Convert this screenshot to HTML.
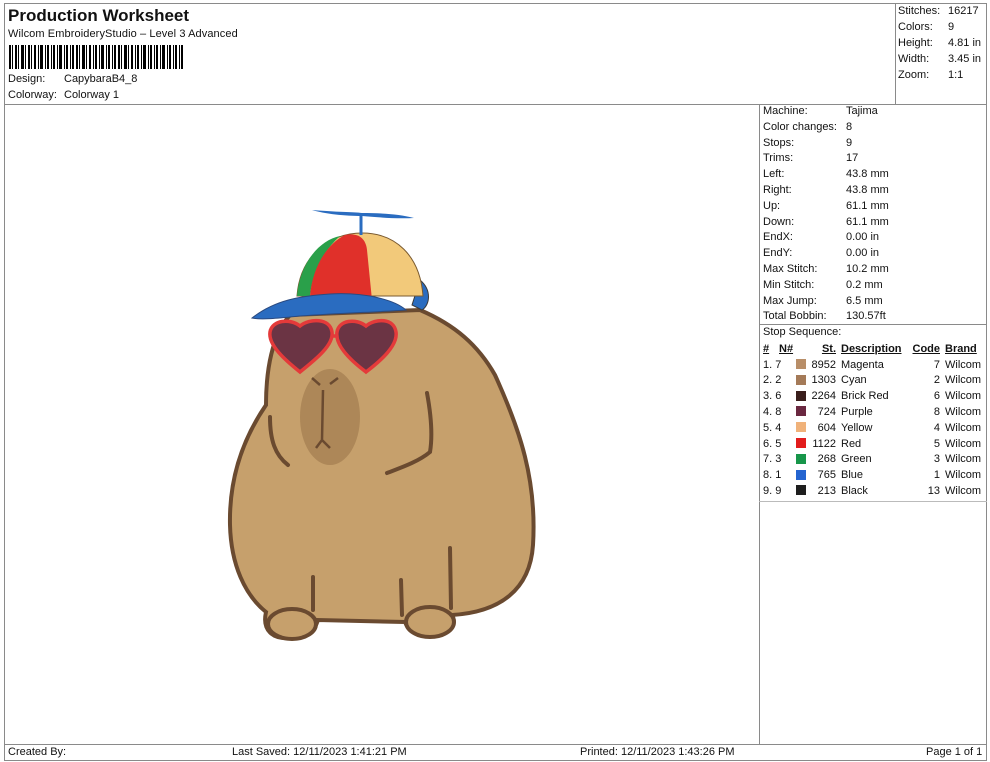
<!DOCTYPE html>
<html><head><meta charset="utf-8"><style>
*{margin:0;padding:0;box-sizing:border-box}
body{width:990px;height:762px;background:#fff;font-family:"Liberation Sans",Arial,sans-serif;font-size:11px;color:#111;position:relative;overflow:hidden}
.a{position:absolute;white-space:nowrap;line-height:13px}
.ln{position:absolute;background:#8a8a8a}
.sw{position:absolute;width:10px;height:10px}
u{text-decoration:underline}
</style></head><body>
<div class="ln" style="left:4px;top:3px;width:983px;height:1px"></div>
<div class="ln" style="left:4px;top:3px;width:1px;height:757px"></div>
<div class="ln" style="left:986px;top:3px;width:1px;height:757px"></div>
<div class="ln" style="left:4px;top:104px;width:983px;height:1px"></div>
<div class="ln" style="left:895px;top:3px;width:1px;height:101px"></div>
<div class="ln" style="left:759px;top:104px;width:1px;height:640px"></div>
<div class="ln" style="left:759px;top:324px;width:228px;height:1px"></div>
<div class="ln" style="left:759px;top:501px;width:228px;height:1px;background:#bbb"></div>
<div class="ln" style="left:4px;top:744px;width:983px;height:1px"></div>
<div class="ln" style="left:4px;top:760px;width:983px;height:1px"></div>

<div class="a" style="left:8px;top:6px;font-size:17px;font-weight:bold;line-height:20px">Production Worksheet</div>
<div class="a" style="left:8px;top:28px;letter-spacing:0.1px">Wilcom EmbroideryStudio – Level 3 Advanced</div>
<svg class="a" style="left:9px;top:45px" width="175" height="24">
<g fill="#000">
<rect x="0" width="2" height="24"/><rect x="3" width="1" height="24"/><rect x="6" width="2" height="24"/><rect x="9" width="1" height="24"/><rect x="12" width="3" height="24"/><rect x="16" width="1" height="24"/><rect x="19" width="2" height="24"/><rect x="22" width="1" height="24"/><rect x="25" width="2" height="24"/><rect x="29" width="1" height="24"/><rect x="31" width="3" height="24"/><rect x="36" width="1" height="24"/><rect x="38" width="2" height="24"/><rect x="42" width="1" height="24"/><rect x="44" width="2" height="24"/><rect x="48" width="1" height="24"/><rect x="50" width="3" height="24"/><rect x="55" width="1" height="24"/><rect x="57" width="2" height="24"/><rect x="61" width="1" height="24"/><rect x="63" width="2" height="24"/><rect x="67" width="2" height="24"/><rect x="70" width="1" height="24"/><rect x="73" width="3" height="24"/><rect x="77" width="1" height="24"/><rect x="80" width="2" height="24"/><rect x="84" width="1" height="24"/><rect x="86" width="2" height="24"/><rect x="90" width="1" height="24"/><rect x="92" width="3" height="24"/><rect x="97" width="1" height="24"/><rect x="99" width="2" height="24"/><rect x="103" width="1" height="24"/><rect x="105" width="2" height="24"/><rect x="109" width="2" height="24"/><rect x="112" width="1" height="24"/><rect x="115" width="3" height="24"/><rect x="119" width="1" height="24"/><rect x="122" width="2" height="24"/><rect x="126" width="1" height="24"/><rect x="128" width="2" height="24"/><rect x="132" width="1" height="24"/><rect x="134" width="3" height="24"/><rect x="139" width="1" height="24"/><rect x="141" width="2" height="24"/><rect x="145" width="1" height="24"/><rect x="147" width="2" height="24"/><rect x="151" width="1" height="24"/><rect x="153" width="3" height="24"/><rect x="158" width="1" height="24"/><rect x="160" width="2" height="24"/><rect x="164" width="1" height="24"/><rect x="166" width="2" height="24"/><rect x="170" width="1" height="24"/><rect x="172" width="2" height="24"/>
</g></svg>
<div class="a" style="left:8px;top:73px">Design:</div><div class="a" style="left:64px;top:73px">CapybaraB4_8</div>
<div class="a" style="left:8px;top:89px">Colorway:</div><div class="a" style="left:64px;top:89px">Colorway 1</div>

<div class="a" style="left:898px;top:5px">Stitches:</div><div class="a" style="left:948px;top:5px">16217</div>
<div class="a" style="left:898px;top:21px">Colors:</div><div class="a" style="left:948px;top:21px">9</div>
<div class="a" style="left:898px;top:37px">Height:</div><div class="a" style="left:948px;top:37px">4.81 in</div>
<div class="a" style="left:898px;top:53px">Width:</div><div class="a" style="left:948px;top:53px">3.45 in</div>
<div class="a" style="left:898px;top:69px">Zoom:</div><div class="a" style="left:948px;top:69px">1:1</div>

<div style="position:absolute;left:763px;top:105px">
<div class="a" style="top:0">Machine:</div><div class="a" style="left:83px;top:0">Tajima</div>
<div class="a" style="top:15.8px">Color changes:</div><div class="a" style="left:83px;top:15.8px">8</div>
<div class="a" style="top:31.6px">Stops:</div><div class="a" style="left:83px;top:31.6px">9</div>
<div class="a" style="top:47.4px">Trims:</div><div class="a" style="left:83px;top:47.4px">17</div>
<div class="a" style="top:63.2px">Left:</div><div class="a" style="left:83px;top:63.2px">43.8 mm</div>
<div class="a" style="top:79px">Right:</div><div class="a" style="left:83px;top:79px">43.8 mm</div>
<div class="a" style="top:94.8px">Up:</div><div class="a" style="left:83px;top:94.8px">61.1 mm</div>
<div class="a" style="top:110.6px">Down:</div><div class="a" style="left:83px;top:110.6px">61.1 mm</div>
<div class="a" style="top:126.4px">EndX:</div><div class="a" style="left:83px;top:126.4px">0.00 in</div>
<div class="a" style="top:142.2px">EndY:</div><div class="a" style="left:83px;top:142.2px">0.00 in</div>
<div class="a" style="top:158px">Max Stitch:</div><div class="a" style="left:83px;top:158px">10.2 mm</div>
<div class="a" style="top:173.8px">Min Stitch:</div><div class="a" style="left:83px;top:173.8px">0.2 mm</div>
<div class="a" style="top:189.6px">Max Jump:</div><div class="a" style="left:83px;top:189.6px">6.5 mm</div>
<div class="a" style="top:205.4px">Total Bobbin:</div><div class="a" style="left:83px;top:205.4px">130.57ft</div>
<div class="a" style="top:221.2px">Stop Sequence:</div>
</div>

<div style="position:absolute;left:0;top:343px;font-weight:bold">
<div class="a" style="left:763px"><u>#</u></div><div class="a" style="left:779px"><u>N#</u></div>
<div class="a" style="left:805px;width:31px;text-align:right"><u>St.</u></div>
<div class="a" style="left:841px"><u>Description</u></div>
<div class="a" style="left:905px;width:35px;text-align:right"><u>Code</u></div>
<div class="a" style="left:945px"><u>Brand</u></div>
</div>
<div id="rows"></div>
<script>
var d=[["1. 7","#b88e68","8952","Magenta","7"],["2. 2","#a47a58","1303","Cyan","2"],["3. 6","#3a1e1c","2264","Brick Red","6"],["4. 8","#6a2840","724","Purple","8"],["5. 4","#f0b27a","604","Yellow","4"],["6. 5","#e21c1c","1122","Red","5"],["7. 3","#17964a","268","Green","3"],["8. 1","#2464d0","765","Blue","1"],["9. 9","#1e1e1e","213","Black","13"]];
var h="";d.forEach(function(r,i){var t=358.5+i*15.8;
h+='<div class="a" style="left:763px;top:'+t+'px">'+r[0]+'</div><div class="sw" style="left:796px;top:'+(t+0.5)+'px;background:'+r[1]+'"></div><div class="a" style="left:800px;width:36px;text-align:right;top:'+t+'px">'+r[2]+'</div><div class="a" style="left:841px;top:'+t+'px">'+r[3]+'</div><div class="a" style="left:905px;width:35px;text-align:right;top:'+t+'px">'+r[4]+'</div><div class="a" style="left:945px;top:'+t+'px">Wilcom</div>';});
document.getElementById("rows").innerHTML=h;
</script>

<div class="a" style="left:8px;top:746px">Created By:</div>
<div class="a" style="left:232px;top:746px">Last Saved: 12/11/2023 1:41:21 PM</div>
<div class="a" style="left:580px;top:746px">Printed: 12/11/2023 1:43:26 PM</div>
<div class="a" style="left:926px;top:746px">Page 1 of 1</div>

<svg style="position:absolute;left:0;top:0" width="760" height="744">
<g stroke="#6a4a30" stroke-width="4" stroke-linecap="round" fill="none">
<path fill="#c6a06c" d="M290 315 C 272 335,266 370,266 405 C 242 440,229 480,230 525 C 231 565,245 595,266 612 C 262 630,272 640,292 638 C 305 640,315 630,318 620 L 405 622 C 410 636,430 640,445 633 C 455 628,455 620,452 615 C 500 612,530 590,533 545 C 537 480,520 430,495 375 C 478 345,455 325,420 310 Z"/>
<ellipse cx="292" cy="624" rx="24" ry="15" fill="#c6a06c"/>
<ellipse cx="430" cy="622" rx="24" ry="15" fill="#c6a06c"/>
<path d="M313 577 L313 610 M401 580 L402 615 M450 548 L451 608"/>
<path d="M270 417 C 270 440,275 455,288 465 M427 393 C 432 420,432 440,430 452 C 418 462,400 468,387 473"/>
</g>
<ellipse cx="330" cy="417" rx="30" ry="48" fill="#ad8758"/>
<path d="M323 390 L322 440 L316 448 M322 440 L330 448 M312 378 L320 385 M338 378 L330 384" stroke="#6a4a30" stroke-width="2.5" fill="none"/>
<g fill="#6b3444" stroke="#e43a3a" stroke-width="3.5">
<path d="M300 372 C 285 360,268 345,270 332 C 272 320,290 318,300 326 C 310 318,330 318,332 332 C 334 345,315 360,300 372 Z"/>
<path d="M366 372 C 350 360,335 345,337 332 C 339 320,356 318,366 326 C 376 318,394 318,396 332 C 398 345,382 360,366 372 Z"/>
<path d="M332 336 L337 336" fill="none"/>
</g>
<path d="M420 280 C 432 290,430 305,422 310 L412 305 Z" fill="#2a6cc0" stroke="#3a3a3a" stroke-width="1"/>
<path d="M297 296 C 300 255,330 233,362 233 C 395 233,420 255,423 296 Z" fill="#f2c97a" stroke="#7a5a30" stroke-width="1"/>
<path d="M297 296 C 300 262,320 240,340 236 C 322 252,312 275,310 296 Z" fill="#2aa04a"/>
<path d="M310 296 C 312 270,325 245,345 235 C 360 232,366 240,367 250 L 372 300 Z" fill="#e0302a"/>
<path d="M252 318 C 275 300,300 296,330 294 C 365 292,395 300,406 310 C 380 312,340 313,300 316 C 280 318,262 320,252 318 Z" fill="#2a6cc0" stroke="#2a4a80" stroke-width="1"/>
<path d="M312 210 C 335 212,355 212,362 213 C 380 213,400 214,414 218 C 395 219,375 217,362 216 C 345 216,325 214,312 210 Z" fill="#2a6cc0"/>
<path d="M361 214 L361 235" stroke="#2a6cc0" stroke-width="3"/>
</svg>
</body></html>
